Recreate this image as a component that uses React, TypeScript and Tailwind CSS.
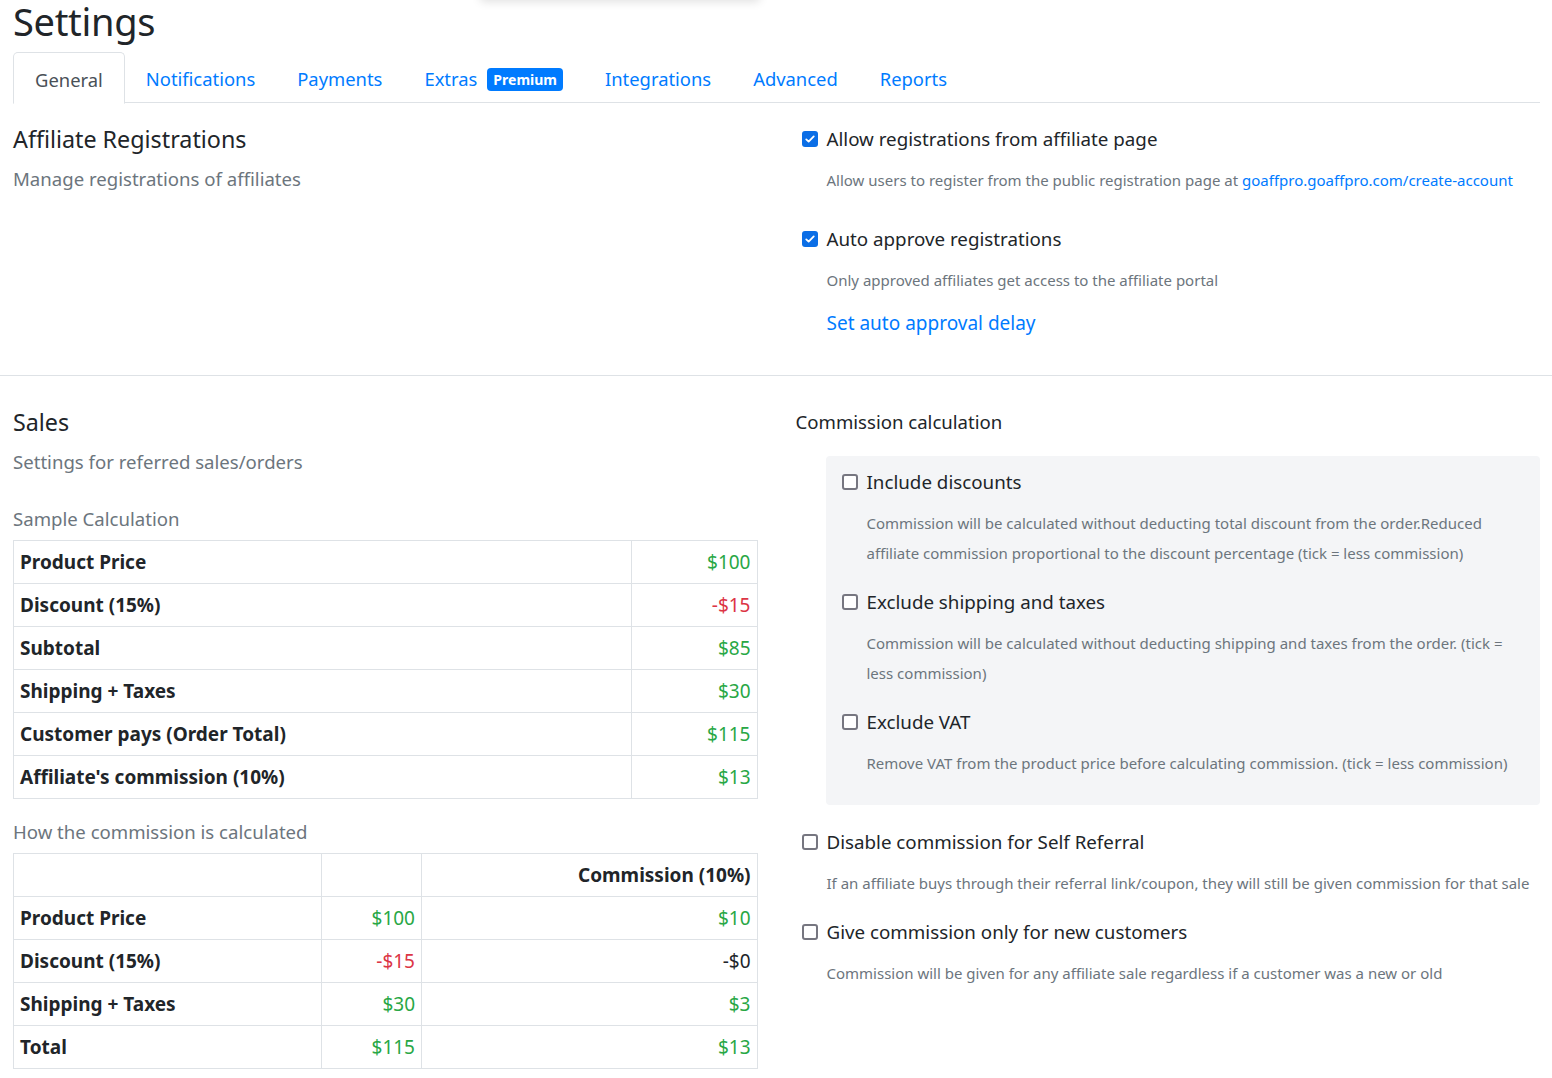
import React from "react"

const font = "font-['Noto_Sans',sans-serif]"

const tabs = ["General", "Notifications", "Payments", "Extras", "Integrations", "Advanced", "Reports"]

function Box({ checked }: { checked?: boolean }) {
  if (checked) {
    return (
      <span className="flex h-[16px] w-[16px] shrink-0 items-center justify-center rounded-[3px] bg-[#0b6ee6]">
        <svg viewBox="0 0 16 16" className="h-[12px] w-[12px]" fill="none" stroke="white" strokeWidth="2.4" strokeLinecap="round" strokeLinejoin="round">
          <path d="M3 8.5l3.2 3L13 4.5" />
        </svg>
      </span>
    )
  }
  return <span className="block h-[16px] w-[16px] shrink-0 rounded-[3px] border-2 border-[#767680] bg-white" />
}

function Option({ label, checked }: { label: string; checked?: boolean }) {
  return (
    <div className="flex h-[30px] items-center">
      <Box checked={checked} />
      <span className="ml-[9px] text-[18.75px] text-[#212529]">{label}</span>
    </div>
  )
}

function Hint({ children }: { children: React.ReactNode }) {
  return <p className="ml-[25px] mt-[11px] text-[15px] leading-[30px] text-[#6c757d]">{children}</p>
}

const sample = [
  ["Product Price", "$100", "g"],
  ["Discount (15%)", "-$15", "r"],
  ["Subtotal", "$85", "g"],
  ["Shipping + Taxes", "$30", "g"],
  ["Customer pays (Order Total)", "$115", "g"],
  ["Affiliate's commission (10%)", "$13", "g"],
]

const calc = [
  ["Product Price", "$100", "g", "$10", "g"],
  ["Discount (15%)", "-$15", "r", "-$0", "d"],
  ["Shipping + Taxes", "$30", "g", "$3", "g"],
  ["Total", "$115", "g", "$13", "g"],
]

function tone(t: string) {
  if (t === "g") return "text-[#28a745]"
  if (t === "r") return "text-[#dc3545]"
  return "text-[#212529]"
}

export default function App() {
  return (
    <div className={"relative min-h-[1078px] overflow-hidden bg-white text-[#212529] " + font}>
      {/* toast shadow peeking at the top */}
      <div className="absolute left-[480px] top-[-40px] h-[40px] w-[280px] rounded bg-white shadow-[0_2px_10px_rgba(0,0,0,0.12)]" />

      <div className="pl-[13px] pr-[12px]">
        <h1 className="h-[52px] pt-[1px] text-[38px] leading-[40px] tracking-[-0.3px]">Settings</h1>

        {/* tabs */}
        <div className="flex h-[51px] border-b border-[#dee2e6]">
          {tabs.map((t, i) => (
            <div
              key={t}
              className={
                "flex h-[51px] items-center px-[21px] pt-[3px] text-[18.4px] " +
                (i === 0
                  ? "-mb-px h-[52px] rounded-t-[5px] border border-b-white border-[#dee2e6] bg-white text-[#495057]"
                  : "text-[#007bff]")
              }
            >
              {t}
              {t === "Extras" && (
                <span className="ml-[10px] rounded-[4px] bg-[#007bff] px-[6px] py-[1px] text-[14px] font-bold text-white">Premium</span>
              )}
            </div>
          ))}
        </div>
      </div>

      {/* Affiliate registrations */}
      <div className="grid grid-cols-2 gap-[38px] border-b border-[#dee2e6] pb-[37px] pl-[13px] pr-[12px] pt-[21px]">
        <div>
          <h2 className="h-[30px] text-[23.3px] leading-[30px]">Affiliate Registrations</h2>
          <p className="mt-[10px] text-[18.6px] leading-[30px] text-[#6c757d]">Manage registrations of affiliates</p>
        </div>
        <div className="pl-[6px]">
          <Option label="Allow registrations from affiliate page" checked />
          <Hint>
            Allow users to register from the public registration page at{" "}
            <span className="text-[#007bff]">goaffpro.goaffpro.com/create-account</span>
          </Hint>
          <div className="mt-[29px]">
            <Option label="Auto approve registrations" checked />
          </div>
          <Hint>Only approved affiliates get access to the affiliate portal</Hint>
          <p className="ml-[25px] mt-[13px] text-[19px] leading-[30px] text-[#007bff]">Set auto approval delay</p>
        </div>
      </div>

      {/* Sales */}
      <div className="grid grid-cols-2 gap-[38px] pl-[13px] pr-[12px] pt-[31px]">
        <div>
          <h2 className="text-[23.3px] leading-[30px]">Sales</h2>
          <p className="mt-[10px] text-[18.6px] leading-[30px] text-[#6c757d]">Settings for referred sales/orders</p>
          <p className="mt-[27px] text-[18.6px] leading-[30px] text-[#6c757d]">Sample Calculation</p>
          <table className="mt-[6px] w-full border-collapse text-[19px]">
            <tbody>
              {sample.map(([a, b, t]) => (
                <tr key={a} className="h-[43px]">
                  <td className="border border-[#dee2e6] px-[6px] pt-[1px] font-bold">{a}</td>
                  <td className={"w-[126px] border border-[#dee2e6] px-[6px] pt-[1px] text-right " + tone(t)}>{b}</td>
                </tr>
              ))}
            </tbody>
          </table>
          <p className="mt-[18px] text-[18.6px] leading-[30px] text-[#6c757d]">How the commission is calculated</p>
          <table className="mt-[6px] w-full border-collapse text-[19px]">
            <tbody>
              <tr className="h-[43px]">
                <td className="w-[308px] border border-[#dee2e6]" />
                <td className="w-[100px] border border-[#dee2e6]" />
                <td className="border border-[#dee2e6] px-[6px] pt-[1px] text-right font-bold">Commission (10%)</td>
              </tr>
              {calc.map(([a, b, t, c, u]) => (
                <tr key={a} className="h-[43px]">
                  <td className="border border-[#dee2e6] px-[6px] pt-[1px] font-bold">{a}</td>
                  <td className={"border border-[#dee2e6] px-[6px] pt-[1px] text-right " + tone(t)}>{b}</td>
                  <td className={"border border-[#dee2e6] px-[6px] pt-[1px] text-right " + tone(u)}>{c}</td>
                </tr>
              ))}
            </tbody>
          </table>
        </div>

        <div>
          <h3 className="text-[18.6px] leading-[30px]">Commission calculation</h3>
          <div className="ml-[30px] mt-[19px] rounded-[4px] bg-[#f4f5f7] pb-[27px] pl-[16px] pr-[16px] pt-[11px]">
            <Option label="Include discounts" />
            <Hint>
              Commission will be calculated without deducting total discount from the order.Reduced affiliate commission proportional to the discount percentage (tick = less commission)
            </Hint>
            <div className="mt-[19px]">
              <Option label="Exclude shipping and taxes" />
            </div>
            <Hint>Commission will be calculated without deducting shipping and taxes from the order. (tick = less commission)</Hint>
            <div className="mt-[19px]">
              <Option label="Exclude VAT" />
            </div>
            <Hint>Remove VAT from the product price before calculating commission. (tick = less commission)</Hint>
          </div>
          <div className="mt-[22px] pl-[6px]">
            <Option label="Disable commission for Self Referral" />
            <Hint>If an affiliate buys through their referral link/coupon, they will still be given commission for that sale</Hint>
            <div className="mt-[19px]">
              <Option label="Give commission only for new customers" />
            </div>
            <Hint>Commission will be given for any affiliate sale regardless if a customer was a new or old</Hint>
          </div>
        </div>
      </div>
    </div>
  )
}
